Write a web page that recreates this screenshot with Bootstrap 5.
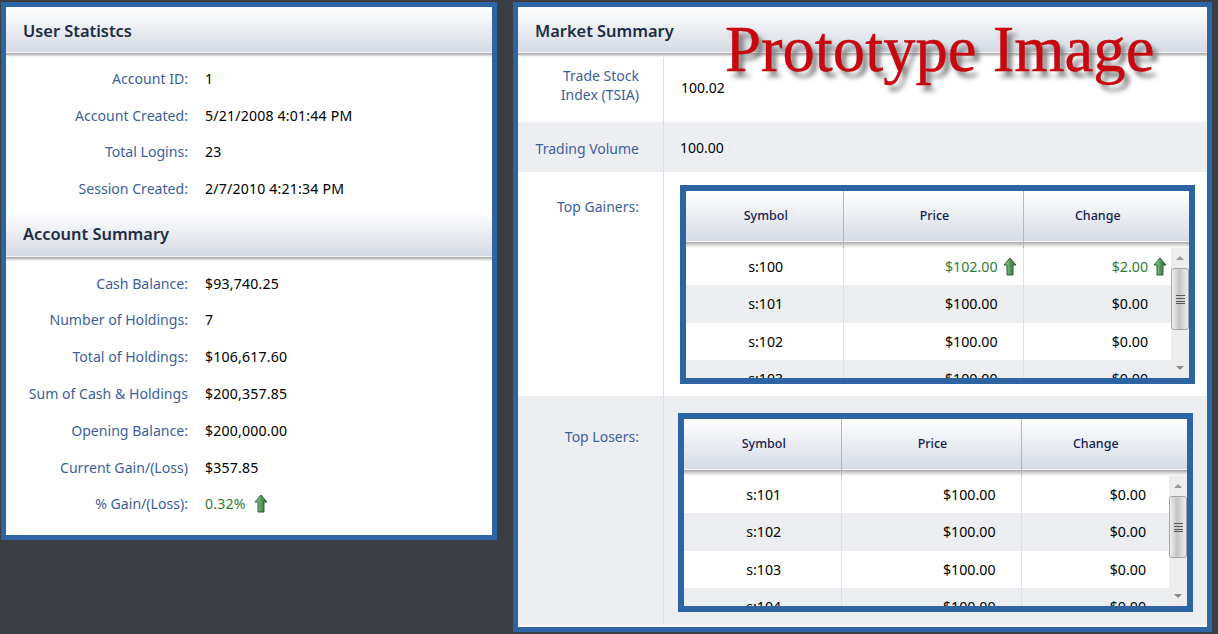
<!DOCTYPE html>
<html lang="en">
<head>
  <meta charset="UTF-8">
  <title>Trade Summary</title>
  <link href="https://cdn.jsdelivr.net/npm/bootstrap@5.3.0/dist/css/bootstrap.min.css" rel="stylesheet">
  <style>
    html, body { height: 100%; }
    body { background: #3b3f44; font-family: "Noto Sans", "Liberation Sans", sans-serif; font-size: 14px; color: #000; overflow: hidden; }
    .page { padding: 2px 6px 0 1px; gap: 16px; height: 634px; }
    .panel { border: 5px solid #2c64a4; background: #fff; position: relative; }
    .panel-left { width: 496px; height: 538px; }
    .panel-right { width: 699px; height: 630px; }
    .band { height: 50px; padding: 0 17px 1px; font-size: 16.4px; font-weight: 600; color: #1c2c44;
      background: linear-gradient(#fff 0, #d5dae4 45px, #f4f4f4 45px, #f4f4f4 46px, #a8a8a8 46px, #b8b8b8 47px, #e6e6e6 49px, #fff 50px); }
    .stat-rows { padding: 3px 0 0; font-size: 14.1px; }
    .stat-rows + .band { margin-top: 4px; padding-bottom: 3px; }
    .band + .stat-rows ~ .stat-rows { padding-top: 3.5px; }
    .stat-row { height: 36.8px; }
    .stat-name { width: 182px; text-align: right; color: #3c5f9c; }
    .stat-val { margin-left: 17px; letter-spacing: .2px; }
    .gain { color: #2f7d32; }
    .arrow { width: 14px; height: 19px; vertical-align: -4px; }
    .arrow-stat { margin-left: 4px; }
    .arrow-cell { margin-left: 5px; }
    .mkt-row { display: grid; grid-template-columns: 146px 1fr; }
    .mkt-name { border-right: 1px solid #dfe0e4; text-align: right; color: #3c5f9c; padding-right: 24px; }
    .mkt-shade { background: #edeef2; }
    .mkt-a { height: 65px; }
    .mkt-a .mkt-name { line-height: 19px; padding-bottom: 10px; }
    .mkt-b .mkt-name { padding-top: 3px; }
    .mkt-val-a { padding: 0 0 5px 17px; }
    .mkt-val-b { padding: 1px 0 0 16px; }
    .mkt-b { height: 50px; }
    .mkt-c { height: 224px; }
    .mkt-c .mkt-name { padding-top: 24px; }
    .mkt-d { height: 229px; }
    .mkt-d .mkt-name { padding-top: 30px; }
    .frame { border: 6px solid #2c64a4; width: 515px; height: 199px; overflow: hidden; background: #fff; }
    .frame-a { margin: 13px 0 0 16px; }
    .frame-b { margin: 17px 0 0 14px; }
    .grid-table { table-layout: fixed; border-collapse: collapse; width: 100%; margin: 0; font-size: 14.2px; }
    .grid-head th { height: 57px; padding: 0 0 7px 3px; font-size: 12.5px; font-weight: 500; text-align: center; color: #141c50;
      border-right: 1px solid #b4b6ba;
      background: linear-gradient(#fff 0, #d5dae4 50px, #f4f4f4 50px, #f4f4f4 51px, #a8a8a8 51px, #b8b8b8 52px, #e6e6e6 55px, #fff 57px); }
    .grid-head th:last-child { border-right: 0; padding-right: 20px; }
    .grid-body td { height: 37.4px; padding: 0; border-right: 1px solid #dfe0e4; }
    .grid-body td:last-child { border-right: 0; }
    .grid-body tr:nth-child(even) td { background: #edeef2; }
    .grid-body td.sym { text-align: center; padding-left: 3px; }
    .num { text-align: right; }
    .grid-body td.num-a { padding-right: 25px; }
    .grid-body td.num-b { padding-right: 23px; }
    .grid-body td.num-a-up { padding-right: 6px; }
    .grid-body td.num-b-up { padding-right: 4px; }
    .scroll-wrap { height: 130px; overflow: hidden; }
    .vbar { width: 20px; background: #ededed; }
    .vbar-tri { height: 20px; }
    .vbar-thumb { width: 18px; height: 62px; margin: 0 auto; border: 1px solid #a4a4a4; border-radius: 3px;
      background: linear-gradient(90deg, #efefef, #c4c4c4 45%, #d8d8d8 70%, #ececec); }
    .grip { width: 9px; height: 1px; background: #555; box-shadow: 0 3px 0 #555, 0 6px 0 #555, 0 8px 0 #555; margin-bottom: 8px; }
    .stamp { position: absolute; left: 207px; top: 2px; font-family: "Liberation Serif", serif; font-size: 64.7px; line-height: 80px; color: #c80810; -webkit-text-stroke: .4px #c00000; text-shadow: 5px 6px 5px #7a7a7a; white-space: nowrap; pointer-events: none; }
  </style>
</head>
<body>

<svg width="0" height="0" class="position-absolute">
  <defs>
    <linearGradient id="arrowFill" x1="0" x2="1" y1="0" y2="0">
      <stop offset="0" stop-color="#a5d3a5"/>
      <stop offset="0.6" stop-color="#4b8f52"/>
      <stop offset="1" stop-color="#2f6b3a"/>
    </linearGradient>
    <symbol id="upArrow" viewBox="0 0 14 19">
      <path d="M7 1 L13 8 L10 8 L10 18 L4 18 L4 8 L1 8 Z" fill="url(#arrowFill)" stroke="#2f5f38" stroke-width="1"/>
    </symbol>
  </defs>
</svg>

<div class="page d-flex align-items-start">

  <div class="panel panel-left">
    <div class="band d-flex align-items-center">User Statistcs</div>
    <div class="stat-rows">
      <div class="stat-row d-flex align-items-center"><div class="stat-name">Account ID:</div><div class="stat-val">1</div></div>
      <div class="stat-row d-flex align-items-center"><div class="stat-name">Account Created:</div><div class="stat-val">5/21/2008 4:01:44 PM</div></div>
      <div class="stat-row d-flex align-items-center"><div class="stat-name">Total Logins:</div><div class="stat-val">23</div></div>
      <div class="stat-row d-flex align-items-center"><div class="stat-name">Session Created:</div><div class="stat-val">2/7/2010 4:21:34 PM</div></div>
    </div>
    <div class="band d-flex align-items-center">Account Summary</div>
    <div class="stat-rows">
      <div class="stat-row d-flex align-items-center"><div class="stat-name">Cash Balance:</div><div class="stat-val">$93,740.25</div></div>
      <div class="stat-row d-flex align-items-center"><div class="stat-name">Number of Holdings:</div><div class="stat-val">7</div></div>
      <div class="stat-row d-flex align-items-center"><div class="stat-name">Total of Holdings:</div><div class="stat-val">$106,617.60</div></div>
      <div class="stat-row d-flex align-items-center"><div class="stat-name">Sum of Cash &amp; Holdings</div><div class="stat-val">$200,357.85</div></div>
      <div class="stat-row d-flex align-items-center"><div class="stat-name">Opening Balance:</div><div class="stat-val">$200,000.00</div></div>
      <div class="stat-row d-flex align-items-center"><div class="stat-name">Current Gain/(Loss)</div><div class="stat-val">$357.85</div></div>
      <div class="stat-row d-flex align-items-center"><div class="stat-name">% Gain/(Loss):</div><div class="stat-val gain">0.32% <svg class="arrow arrow-stat"><use href="#upArrow"/></svg></div></div>
    </div>
  </div>

  <div class="panel panel-right">
    <div class="band d-flex align-items-center">Market Summary</div>
    <div class="stamp">Prototype Image</div>

    <div class="mkt-row mkt-a">
      <div class="mkt-name d-flex align-items-center justify-content-end">Trade Stock<br>Index (TSIA)</div>
      <div class="mkt-val-a d-flex align-items-center">100.02</div>
    </div>
    <div class="mkt-row mkt-b mkt-shade">
      <div class="mkt-name d-flex align-items-center justify-content-end">Trading Volume</div>
      <div class="mkt-val-b d-flex align-items-center">100.00</div>
    </div>
    <div class="mkt-row mkt-c">
      <div class="mkt-name">Top Gainers:</div>
      <div>
        <div class="frame frame-a">
          <table class="grid-table grid-head">
            <colgroup><col style="width:157px"><col style="width:180px"><col></colgroup>
            <thead><tr><th>Symbol</th><th>Price</th><th>Change</th></tr></thead>
          </table>
          <div class="d-flex">
            <div class="scroll-wrap flex-grow-1">
              <table class="grid-table grid-body">
                <colgroup><col style="width:157px"><col style="width:180px"><col></colgroup>
                <tbody>
                  <tr><td class="sym">s:100</td><td class="num num-a-up gain">$102.00<svg class="arrow arrow-cell"><use href="#upArrow"/></svg></td><td class="num num-b-up gain">$2.00<svg class="arrow arrow-cell"><use href="#upArrow"/></svg></td></tr>
                  <tr><td class="sym">s:101</td><td class="num num-a">$100.00</td><td class="num num-b">$0.00</td></tr>
                  <tr><td class="sym">s:102</td><td class="num num-a">$100.00</td><td class="num num-b">$0.00</td></tr>
                  <tr><td class="sym">s:103</td><td class="num num-a">$100.00</td><td class="num num-b">$0.00</td></tr>
                </tbody>
              </table>
            </div>
            <div class="vbar d-flex flex-column align-items-center">
              <svg class="vbar-tri" width="12" height="20"><path d="M2 12 L6 8 L10 12 Z" fill="#9a9a9a"/></svg>
              <div class="vbar-thumb d-flex flex-column align-items-center justify-content-center"><div class="grip"></div></div>
              <svg class="vbar-tri mt-auto" width="12" height="20"><path d="M2 8 L10 8 L6 12 Z" fill="#8a8a8a"/></svg>
            </div>
          </div>
        </div>
      </div>
    </div>
    <div class="mkt-row mkt-d mkt-shade">
      <div class="mkt-name">Top Losers:</div>
      <div>
        <div class="frame frame-b">
          <table class="grid-table grid-head">
            <colgroup><col style="width:157px"><col style="width:180px"><col></colgroup>
            <thead><tr><th>Symbol</th><th>Price</th><th>Change</th></tr></thead>
          </table>
          <div class="d-flex">
            <div class="scroll-wrap flex-grow-1">
              <table class="grid-table grid-body">
                <colgroup><col style="width:157px"><col style="width:180px"><col></colgroup>
                <tbody>
                  <tr><td class="sym">s:101</td><td class="num num-a">$100.00</td><td class="num num-b">$0.00</td></tr>
                  <tr><td class="sym">s:102</td><td class="num num-a">$100.00</td><td class="num num-b">$0.00</td></tr>
                  <tr><td class="sym">s:103</td><td class="num num-a">$100.00</td><td class="num num-b">$0.00</td></tr>
                  <tr><td class="sym">s:104</td><td class="num num-a">$100.00</td><td class="num num-b">$0.00</td></tr>
                </tbody>
              </table>
            </div>
            <div class="vbar d-flex flex-column align-items-center">
              <svg class="vbar-tri" width="12" height="20"><path d="M2 12 L6 8 L10 12 Z" fill="#9a9a9a"/></svg>
              <div class="vbar-thumb d-flex flex-column align-items-center justify-content-center"><div class="grip"></div></div>
              <svg class="vbar-tri mt-auto" width="12" height="20"><path d="M2 8 L10 8 L6 12 Z" fill="#8a8a8a"/></svg>
            </div>
          </div>
        </div>
      </div>
    </div>
  </div>

</div>

<script src="https://cdn.jsdelivr.net/npm/bootstrap@5.3.0/dist/js/bootstrap.bundle.min.js"></script>
</body>
</html>
